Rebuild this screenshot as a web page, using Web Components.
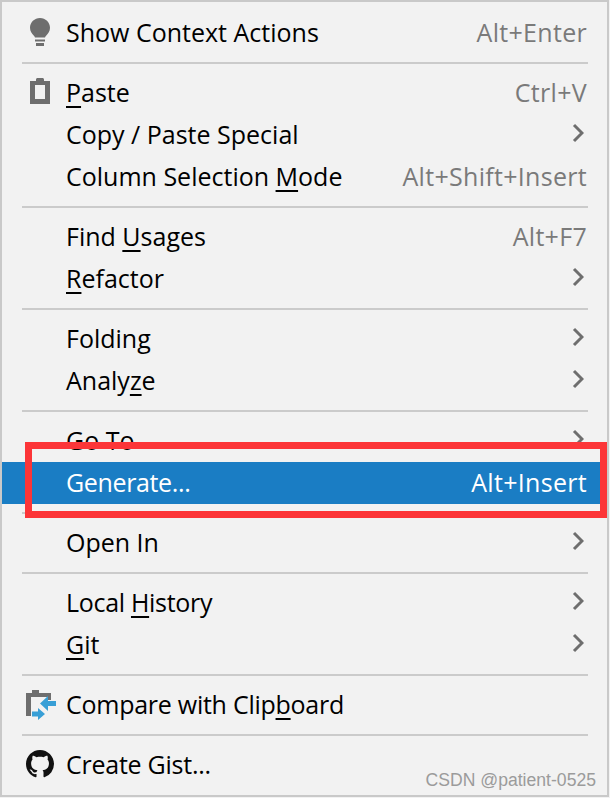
<!DOCTYPE html>
<html>
<head>
<meta charset="utf-8">
<title>Context menu</title>
<style>
  html, body { margin: 0; padding: 0; background: #f2f2f2; }
</style>
</head>
<body>
<context-menu>
  <menu-item shortcut="Alt+Enter">
    <svg slot="icon" width="20" height="28" viewBox="0 0 20 28"><path fill="#6e6e6e" d="M10 0C4.500 0 0 4.300 0 9.800c0 3.700 2 5.900 3.700 7.700.7.800 1.100 1.500 1.300 2h10c.2-.5.600-1.200 1.300-2C18 15.700 20 13.500 20 9.800 20 4.300 15.500 0 10 0z"/><path fill="#6e6e6e" d="M5 21.500h10v2H5zM6 25h8v3H6z"/></svg>
    Show Context Actions
  </menu-item>
  <menu-separator></menu-separator>
  <menu-item shortcut="Ctrl+V">
    <svg slot="icon" style="margin-bottom:2px" width="20" height="26" viewBox="0 0 20 26"><path fill="#6e6e6e" fill-rule="evenodd" d="M0 3h6V1.500C6 .7 6.700 0 7.500 0h5c.8 0 1.500.7 1.500 1.500V3h6v23H0zM5 7v14h10V7z"/></svg>
    <span style="--track:-.4px"><menu-key>P</menu-key>aste</span>
  </menu-item>
  <menu-item submenu>Copy / Paste Special</menu-item>
  <menu-item shortcut="Alt+Shift+Insert">Column Selection <menu-key>M</menu-key>ode</menu-item>
  <menu-separator></menu-separator>
  <menu-item shortcut="Alt+F7">Find <menu-key>U</menu-key>sages</menu-item>
  <menu-item submenu><menu-key>R</menu-key>efactor</menu-item>
  <menu-separator></menu-separator>
  <menu-item submenu>Folding</menu-item>
  <menu-item submenu>Analy<menu-key>z</menu-key>e</menu-item>
  <menu-separator></menu-separator>
  <menu-item submenu>Go To</menu-item>
  <menu-item selected shortcut="Alt+Insert" style="--track:-.36px">Generate...</menu-item>
  <menu-separator></menu-separator>
  <menu-item submenu>Open In</menu-item>
  <menu-separator></menu-separator>
  <menu-item submenu style="--track:-.3px">Local <menu-key>H</menu-key>istory</menu-item>
  <menu-item submenu><menu-key>G</menu-key>it</menu-item>
  <menu-separator></menu-separator>
  <menu-item style="--track:-.26px">
    <svg slot="icon" style="margin:2px 0 0 2px" width="30" height="30" viewBox="0 0 30 30"><path fill="#6e6e6e" d="M0 3h6V0h7v3h12v7h-3V7H5v19H0z"/><path fill="#389fd6" d="M14 13.500L22 6v5h8v5h-8v5zM19 24l-7-6v3.500H6v5h6V30z"/></svg>
    Compare with Clip<menu-key>b</menu-key>oard
  </menu-item>
  <menu-separator></menu-separator>
  <menu-item style="--track:-.25px">
    <svg slot="icon" width="28" height="28" viewBox="0 0 16 16"><path fill="#111" d="M8 0C3.580 0 0 3.580 0 8c0 3.540 2.290 6.530 5.470 7.590.4.070.55-.17.55-.38 0-.19-.01-.82-.01-1.490-2.010.37-2.530-.49-2.690-.94-.09-.23-.48-.94-.82-1.130-.28-.15-.68-.52-.01-.53.630-.01 1.080.58 1.230.82.720 1.210 1.870.87 2.330.66.070-.52.280-.87.510-1.070-1.780-.2-3.640-.89-3.640-3.950 0-.87.310-1.590.820-2.150-.08-.2-.36-1.020.08-2.120 0 0 .67-.21 2.200.82.640-.18 1.320-.27 2-.27s1.360.09 2 .27c1.530-1.040 2.200-.82 2.200-.82.440 1.100.16 1.920.08 2.120.51.560.82 1.270.82 2.150 0 3.070-1.870 3.750-3.650 3.950.29.250.54.730.54 1.480 0 1.070-.01 1.930-.01 2.200 0 .21.150.46.550.38A8.010 8.010 0 0 0 16 8c0-4.420-3.580-8-8-8z"/></svg>
    Create Gist...
  </menu-item>
  <highlight-box slot="overlay"></highlight-box>
  <water-mark slot="overlay">CSDN @patient-0525</water-mark>
</context-menu>

<script>
// small base class, each element just stamps its own shadow markup
class ShadowElement extends HTMLElement {
  constructor() {
    super();
    this.attachShadow({ mode: 'open' }).innerHTML = this.constructor.markup.trim();
  }
}

class ContextMenu extends ShadowElement {
  static markup = `
    <style>
      :host {
        display: block;
        position: relative;
        box-sizing: border-box;
        width: 609px;
        height: 797px;
        padding: 10px 0 0;
        background: #f2f2f2;
        border: 2px solid #c9c9c9;
        color: #000;
        font: 25px/38px "Open Sans", sans-serif;
        overflow: hidden;
      }
    </style>
    <slot></slot>
    <slot name="overlay"></slot>
  `;
}

class MenuItem extends ShadowElement {
  static markup = `
    <style>
      :host {
        display: grid;
        grid-template-columns: 64px 1fr auto;
        align-items: center;
        height: 42px;
        padding-right: 20px;
        white-space: nowrap;
      }
      :host([selected]) {
        background: #1a7dc4;
        color: #fff;
      }
      .icon { display: flex; justify-content: center; padding: 0 0 2px 12px; }
      .icon ::slotted(svg) { display: block; }
      /* bottom padding lifts the text 1px off the row centre */
      .label { padding-bottom: 2px; letter-spacing: var(--track, 0); }
      .hint { padding-bottom: 2px; color: #7a7a7a; letter-spacing: .3px; }
      :host([selected]) .hint { color: #fff; }
      .arrow { display: none; margin: 0 3px 4px 0; }
      :host([submenu]) .arrow { display: block; }
    </style>
    <span class="icon"><slot name="icon"></slot></span>
    <span class="label"><slot></slot></span>
    <span class="hint"></span>
    <svg class="arrow" width="12" height="20" viewBox="0 0 12 20"><path d="M2 2l8 8-8 8" fill="none" stroke="#6e6e6e" stroke-width="3"/></svg>
  `;

  connectedCallback() {
    const hint = this.shadowRoot.querySelector('.hint');
    hint.textContent = this.getAttribute('shortcut') || '';
    if (this.hasAttribute('submenu')) hint.style.display = 'none';
  }
}

class MenuKey extends ShadowElement {
  static markup = `
    <style>
      :host {
        display: inline;
        text-decoration: underline 2px;
        text-underline-offset: 4px;
      }
    </style><slot></slot>
  `;
}

class MenuSeparator extends ShadowElement {
  static markup = `
    <style>
      :host { display: block; padding: 8px 19px 8px 20px; }
      div { height: 2px; background: #cbcbcb; }
    </style>
    <div></div>
  `;
}

class HighlightBox extends ShadowElement {
  static markup = `
    <style>
      :host {
        position: absolute;
        left: 23px;
        top: 440px;
        width: 568px;
        height: 62px;
        border: 7px solid #fc3538;
      }
    </style>
  `;
}

class WaterMark extends ShadowElement {
  static markup = `
    <style>
      :host {
        position: absolute;
        right: 11px;
        bottom: 3px;
        color: #9b9b9b;
        font: 17.6px/24px "Liberation Sans", sans-serif;
      }
    </style>
    <slot></slot>
  `;
}

customElements.define('context-menu', ContextMenu);
customElements.define('menu-item', MenuItem);
customElements.define('menu-key', MenuKey);
customElements.define('menu-separator', MenuSeparator);
customElements.define('highlight-box', HighlightBox);
customElements.define('water-mark', WaterMark);
</script>
</body>
</html>
